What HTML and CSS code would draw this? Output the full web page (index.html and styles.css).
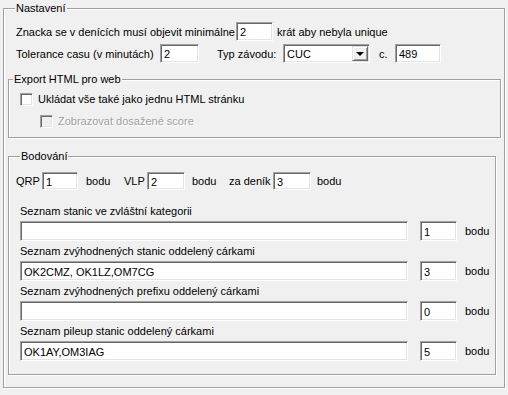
FILE: index.html
```html
<!DOCTYPE html>
<html lang="cs">
<head>
  <meta charset="UTF-8">
  <title>Nastavení</title>
  <link rel="stylesheet" href="styles.css">
</head>
<body>
  <fieldset class="group outer">
    <legend>Nastavení</legend>

    <div class="row row-first">
      <span class="lbl" style="width:220px">Znacka se v denících musí objevit minimálne</span>
      <div class="field w-37">2</div>
      <span class="after">krát aby nebyla unique</span>
    </div>

    <div class="row row-second">
      <span class="lbl" style="width:144px">Tolerance casu (v minutách)</span>
      <div class="field w-39">2</div>
      <span class="lbl typ">Typ závodu:</span>
      <div class="combo">
        <span class="combo-text">CUC</span>
        <span class="combo-btn"><span class="arrow"></span></span>
      </div>
      <span class="lbl cislo">c.</span>
      <div class="field w-46">489</div>
    </div>

    <fieldset class="group export">
      <legend>Export HTML pro web</legend>
      <label class="check">
        <span class="box"></span> Ukládat vše také jako jednu HTML stránku
      </label>
      <label class="check sub disabled">
        <span class="box"></span> Zobrazovat dosažené score
      </label>
    </fieldset>

    <fieldset class="group scoring">
      <legend>Bodování</legend>
      <div class="row points">
        <span class="lbl" style="width:26px">QRP</span>
        <div class="field w-36">1</div>
        <span class="lbl bodu" style="width:38px">bodu</span>
        <span class="lbl" style="width:23px">VLP</span>
        <div class="field w-38">2</div>
        <span class="lbl bodu-2" style="width:37px">bodu</span>
        <span class="lbl" style="width:44px">za deník</span>
        <div class="field w-38">3</div>
        <span class="lbl bodu-3">bodu</span>
      </div>

      <div class="list list-first">
        <div class="caption">Seznam stanic ve zvláštní kategorii</div>
        <div class="row line">
          <div class="field wide"></div>
          <div class="field w-37">1</div>
          <span class="unit">bodu</span>
        </div>
      </div>
      <div class="list">
        <div class="caption">Seznam zvýhodnených stanic oddelený cárkami</div>
        <div class="row line">
          <div class="field wide">OK2CMZ, OK1LZ,OM7CG</div>
          <div class="field w-37">3</div>
          <span class="unit">bodu</span>
        </div>
      </div>
      <div class="list">
        <div class="caption">Seznam zvýhodnených prefixu oddelený cárkami</div>
        <div class="row line">
          <div class="field wide"></div>
          <div class="field w-37">0</div>
          <span class="unit">bodu</span>
        </div>
      </div>
      <div class="list">
        <div class="caption">Seznam pileup stanic oddelený cárkami</div>
        <div class="row line">
          <div class="field wide">OK1AY,OM3IAG</div>
          <div class="field w-37">5</div>
          <span class="unit">bodu</span>
        </div>
      </div>
    </fieldset>
  </fieldset>
</body>
</html>
```

FILE: styles.css
```css
html, body { margin: 0; background: #f0f0f0; }
body {
  font-family: "Liberation Sans", Arial, sans-serif;
  font-size: 11px;
  color: #000;
  width: 508px;
  height: 395px;
  overflow: hidden;
}

/* group boxes (etched) */
.group {
  border: 1px solid #a0a0a0;
  box-shadow: inset 1px 1px #fff, 1px 1px #fff;
  margin: 0;
  padding: 0;
  min-width: 0;
}
.group legend {
  padding: 0 1px;
  margin-left: 3px;
  line-height: 13px;
  background: #f0f0f0;
}

.outer {
  margin: 2px 3px 0 3px;
  padding: 7px 3px 12px 4px;
}
.outer > legend { margin-left: 7px; }

.row { display: flex; align-items: center; }
.lbl { white-space: nowrap; flex-shrink: 0; }

.row-first { height: 19px; padding-left: 8px; }
.row-second { height: 19px; padding-left: 8px; margin-top: 3px; }
.after { margin-left: 4px; }
.typ { margin-left: 18px; width: 66px; }
.cislo { margin-left: 9px; width: 16px; }

/* sunken edit box */
.field {
  box-sizing: border-box;
  height: 19px;
  background: #fff;
  border-style: solid;
  border-width: 1px;
  border-color: #a0a0a0 #fff #fff #a0a0a0;
  box-shadow: inset 1px 1px #696969, inset -1px -1px #e3e3e3;
  padding: 2px 3px 0 3px;
  line-height: 14px;
  white-space: nowrap;
  overflow: hidden;
  flex-shrink: 0;
}
.w-36 { width: 36px; }
.w-37 { width: 37px; }
.w-38 { width: 38px; }
.w-39 { width: 39px; }
.w-46 { width: 46px; }

/* combo box */
.combo {
  box-sizing: border-box;
  width: 87px;
  height: 19px;
  display: flex;
  background: #fff;
  border-style: solid;
  border-width: 1px;
  border-color: #a0a0a0 #fff #fff #a0a0a0;
  box-shadow: inset 1px 1px #696969, inset -1px -1px #e3e3e3;
  padding: 1px;
}
.combo-text { flex: 1; padding: 1px 0 0 2px; line-height: 14px; }
.combo-btn {
  box-sizing: border-box;
  width: 16px;
  background: #f0f0f0;
  border-style: solid;
  border-width: 1px;
  border-color: #e3e3e3 #696969 #696969 #e3e3e3;
  box-shadow: inset 1px 1px #fff, inset -1px -1px #a0a0a0;
  display: flex;
  align-items: center;
  justify-content: center;
}
.arrow {
  width: 0;
  height: 0;
  border-left: 4px solid transparent;
  border-right: 4px solid transparent;
  border-top: 4px solid #000;
  margin-top: 1px;
}

/* export group */
.export {
  margin: 10px 0 0 0;
  padding: 5px 0 8px 0;
}
.export > legend { margin-left: 4px; }
.check {
  display: flex;
  align-items: center;
  height: 16px;
  padding-left: 11px;
  white-space: nowrap;
}
.check .box {
  box-sizing: border-box;
  width: 13px;
  height: 13px;
  margin-right: 5px;
  background: #fff;
  border-style: solid;
  border-width: 1px;
  border-color: #a0a0a0 #fff #fff #a0a0a0;
  box-shadow: inset 1px 1px #696969, inset -1px -1px #e3e3e3;
}
.check.sub { padding-left: 31px; margin-top: 6px; }
.check.disabled { color: #a0a0a0; text-shadow: 1px 1px #fff; }
.check.disabled .box { background: #f0f0f0; }

/* scoring group */
.scoring {
  margin: 12px 5px 0 0;
  padding: 9px 0 13px 7px;
}
.scoring > legend { margin-left: 4px; }
.points { height: 18px; }
.points .field { height: 18px; }
.bodu { margin-left: 8px; }
.bodu-2 { margin-left: 7px; }
.bodu-3 { margin-left: 6px; }

.list { padding-left: 4px; }
.list-first { margin-top: 15px; }
.caption { line-height: 13px; height: 13px; white-space: nowrap; }
.line { margin-top: 3px; height: 20px; }
.list + .list .caption { margin-top: 4px; }
.line .field { height: 20px; padding-top: 3px; }
.wide { width: 388px; margin-right: 12px; }
.unit { margin-left: 8px; color: #000; }
```
